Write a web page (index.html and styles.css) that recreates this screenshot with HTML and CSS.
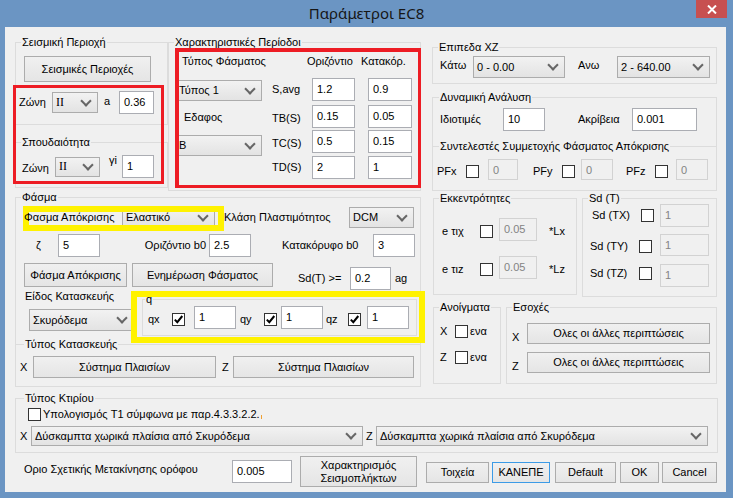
FILE: index.html
```html
<!DOCTYPE html>
<html lang="el">
<head>
<meta charset="utf-8">
<title>Παράμετροι EC8</title>
<link rel="stylesheet" href="styles.css">
</head>
<body>
<div class="window">
  <div class="titlebar">
    <span></span>
    <div class="title">Παράμετροι EC8</div>
    <div class="close"><svg width="10" height="9" viewBox="0 0 10 9"><path d="M1 0.5 L9 8.5 M9 0.5 L1 8.5" stroke="#fff" stroke-width="2"/></svg></div>
  </div>
  <div class="client">
    <div class="top">
      <div class="left-area">
        <div class="row-a">
          <div class="col-seis">
            <div class="group g-seis">
              <div class="legend">Σεισμική Περιοχή</div>
              <div class="btn b-seis">Σεισμικές Περιοχές</div>
              <div class="line l-zone1"><span>Ζώνη</span><div class="sel sel-ii">II</div><span class="ind6 up1">a</span><div class="tb">0.36</div></div>
            </div>
            <div class="group g-spoud">
              <div class="legend">Σπουδαιότητα</div>
              <div class="line l-zone2"><span class="dn1">Ζώνη</span><div class="sel sel-ii">II</div><span class="ind9 gi">γi</span><div class="tb">1</div></div>
            </div>
          </div>
          <div class="group g-xar">
            <div class="legend">Χαρακτηριστικές Περίοδοι</div>
            <div class="xar-body">
              <div class="xar-left">
                <div class="xl-head">Τύπος Φάσματος</div>
                <div class="sel xl-sel1">Τύπος 1</div>
                <div class="xl-ed">Εδαφος</div>
                <div class="sel xl-sel2">B</div>
              </div>
              <div class="xar-right">
                <div class="xr-head"><span>Οριζόντιο</span><span>Κατακόρ.</span></div>
                <div class="line xr-row r1"><span>S,avg</span><div class="tb">1.2</div><div class="tb">0.9</div></div>
                <div class="line xr-row r2"><span class="dn1">TB(S)</span><div class="tb">0.15</div><div class="tb">0.05</div></div>
                <div class="line xr-row r3"><span class="dn1">TC(S)</span><div class="tb">0.5</div><div class="tb">0.15</div></div>
                <div class="line xr-row r4"><span>TD(S)</span><div class="tb">2</div><div class="tb">1</div></div>
              </div>
            </div>
          </div>
        </div>
        <div class="group g-fasma">
          <div class="legend">Φάσμα</div>
          <div class="line f-r1"><span class="above">Φασμα Απόκρισης</span><div class="sel">Ελαστικό</div><span class="ind9">Κλάση Πλαστιμότητος</span><div class="sel">DCM</div></div>
          <div class="line f-r2"><span>ζ</span><div class="tb">5</div><span class="right3">Οριζόντιο b0</span><div class="tb">2.5</div><span class="ind31">Κατακόρυφο b0</span><div class="tb">3</div></div>
          <div class="f-r3">
            <div class="btn b-fa">Φάσμα Απόκρισης</div>
            <div class="btn b-en">Ενημέρωση Φάσματος</div>
            <span class="sd-lbl">Sd(T) &gt;=</span>
            <div class="tb tb-sd">0.2</div>
            <span class="ag">ag</span>
          </div>
          <div class="f-r4">
            <div class="eidos">
              <div class="eidos-lbl">Είδος Κατασκευής</div>
              <div class="sel sel-sky">Σκυρόδεμα</div>
            </div>
            <div class="group g-q">
              <div class="legend lg-q">q</div>
              <div class="q-row">
                <span class="q-l1">qx</span>
                <div class="cb"><svg width="11" height="11" viewBox="0 0 11 11"><path d="M1.8 5.6 L4.3 8.2 L9.3 2" stroke="#000" stroke-width="2" fill="none"/></svg></div>
                <div class="tb q-tb1">1</div>
                <span class="q-l2">qy</span>
                <div class="cb"><svg width="11" height="11" viewBox="0 0 11 11"><path d="M1.8 5.6 L4.3 8.2 L9.3 2" stroke="#000" stroke-width="2" fill="none"/></svg></div>
                <div class="tb q-tb2">1</div>
                <span class="q-l3">qz</span>
                <div class="cb"><svg width="11" height="11" viewBox="0 0 11 11"><path d="M1.8 5.6 L4.3 8.2 L9.3 2" stroke="#000" stroke-width="2" fill="none"/></svg></div>
                <div class="tb q-tb3">1</div>
              </div>
            </div>
          </div>
          <div class="g-typos">
            <div class="legend lg-8">Τύπος Κατασκευής</div>
            <div class="line t-row"><span>X</span><div class="btn">Σύστημα Πλαισίων</div><span class="ind6">Z</span><div class="btn">Σύστημα Πλαισίων</div></div>
          </div>
        </div>
      </div>
      <div class="right-area">
        <div class="group g-epip">
          <div class="legend">Επιπεδα XZ</div>
          <div class="line e-row"><span class="up2">Κάτω</span><div class="sel">0 - 0.00</div><span class="ind13 up2">Ανω</span><div class="sel">2 - 640.00</div></div>
        </div>
        <div class="group g-dyn">
          <div class="legend lg-6">Δυναμική Ανάλυση</div>
          <div class="line d-row"><span>Ιδιοτιμές</span><div class="tb">10</div><span class="ind33">Ακρίβεια</span><div class="tb">0.001</div></div>
          <div class="g-synt">
            <div class="legend lg-6">Συντελεστές Συμμετοχής Φάσματος Απόκρισης</div>
            <div class="p-row">
              <span class="p-l1">PFx</span><div class="cb"></div><div class="tb dis p-tb1">0</div>
              <span class="p-l2">PFy</span><div class="cb"></div><div class="tb dis p-tb2">0</div>
              <span class="p-l3">PFz</span><div class="cb"></div><div class="tb dis p-tb3">0</div>
            </div>
          </div>
        </div>
        <div class="ek-row">
          <div class="group g-ekk">
            <div class="legend">Εκκεντρότητες</div>
            <div class="k-row r1"><span class="k-l">e τιχ</span><div class="cb"></div><div class="tb dis k-tb">0.05</div><span class="k-u">*Lx</span></div>
            <div class="k-row r2"><span class="k-l">e τιz</span><div class="cb"></div><div class="tb dis k-tb">0.05</div><span class="k-u">*Lz</span></div>
          </div>
          <div class="group g-sd">
            <div class="legend">Sd (T)</div>
            <div class="s-row r1"><span class="s-l">Sd (TX)</span><div class="cb"></div><div class="tb dis s-tb">1</div></div>
            <div class="s-row r2"><span class="s-l">Sd (TY)</span><div class="cb"></div><div class="tb dis s-tb">1</div></div>
            <div class="s-row r3"><span class="s-l">Sd (TZ)</span><div class="cb"></div><div class="tb dis s-tb">1</div></div>
          </div>
        </div>
        <div class="an-row">
          <div class="group g-ano">
            <div class="legend">Ανοίγματα</div>
            <div class="a-row r1"><span class="a-l">X</span><div class="cb"></div><span class="a-t">ενα</span></div>
            <div class="a-row r2"><span class="a-l">Z</span><div class="cb"></div><span class="a-t">ενα</span></div>
          </div>
          <div class="group g-eso">
            <div class="legend">Εσοχές</div>
            <div class="o-row r1"><span class="o-l">X</span><div class="btn o-btn">Ολες οι άλλες περιπτώσεις</div></div>
            <div class="o-row r2"><span class="o-l">Z</span><div class="btn o-btn">Ολες οι άλλες περιπτώσεις</div></div>
          </div>
        </div>
      </div>
    </div>
    <div class="group g-ktir">
      <div class="legend lg-8">Τύπος Κτιρίου</div>
      <div class="kt-r1"><div class="cb"></div><span class="kt-t">Υπολογισμός T1 σύμφωνα με παρ.4.3.3.2.2.<i class="mark"></i></span></div>
      <div class="line kt-r2"><span>X</span><div class="sel">Δύσκαμπτα χωρικά πλαίσια από Σκυρόδεμα</div><span class="ind3">Z</span><div class="sel">Δύσκαμπτα χωρικά πλαίσια από Σκυρόδεμα</div></div>
    </div>
    <div class="bottom">
      <span class="bt-lbl">Οριο Σχετικής Μετακίνησης ορόφου</span>
      <div class="tb tb-005">0.005</div>
      <div class="btn b-xar">Χαρακτηρισμός<br>Σεισμοπλήκτων</div>
      <div class="btn b-sm b-toix">Τοιχεία</div>
      <div class="btn b-sm b-kan">ΚΑΝΕΠΕ</div>
      <div class="btn b-sm b-def">Default</div>
      <div class="btn b-sm b-ok">OK</div>
      <div class="btn b-sm b-can">Cancel</div>
    </div>
  </div>
  <div class="hl hl-red1"></div>
  <div class="hl hl-red2"></div>
  <div class="hl hl-yel1"></div>
  <div class="hl hl-yel2"></div>
</div>
</body>
</html>
```
FILE: styles.css
```css
* { box-sizing: border-box; }
html, body { margin: 0; padding: 0; }
body {
  width: 733px; height: 498px; overflow: hidden;
  background: #6b95c3;
  font-family: "Liberation Sans", Arial, sans-serif;
  font-size: 11px; line-height: 13px; color: #000;
}
span, div { white-space: nowrap; }

.window { position: relative; width: 733px; height: 498px; background: #6b95c3; display: flex; flex-direction: column; }
.titlebar { height: 27px; display: grid; grid-template-columns: 1fr auto 1fr; align-items: start; }
.title { font-family: "Noto Sans", "Open Sans", sans-serif; font-size: 15px; line-height: 20px; margin-top: 3px; color: #161616; }
.close { justify-self: end; margin-right: 6px; width: 31px; height: 18px; background: #c75050; display: flex; align-items: center; justify-content: center; }

.client { margin: 0 7px 0 5px; height: 465px; background: #f0f0f0; display: flex; flex-direction: column; }
.top { display: flex; }
.left-area { margin-left: 10px; width: 406px; display: flex; flex-direction: column; }
.right-area { margin-left: 11px; width: 285px; display: flex; flex-direction: column; }
.row-a { display: flex; margin-top: 15px; }
.col-seis { width: 153px; display: flex; flex-direction: column; }

/* group boxes */
.group { border: 1px solid #dcdcdc; }
.legend { width: max-content; height: 13px; margin: -7px 0 -6px 5px; padding: 0 1px; background: #f0f0f0; }
.lg-6 { margin-left: 6px; }
.lg-8 { margin-left: 8px; }
.lg-q { margin-left: 2px; }

/* controls */
.tb { background: #fff; border: 1px solid #abadb3; padding: 2px 0 0 4px; line-height: 16px; height: 23px; overflow: hidden; }
.tb.dis { background: #f0f0f0; border-color: #d2d2d2; color: #838383; }
.sel { border: 1px solid #acacac; background: linear-gradient(#f2f2f2, #e3e3e3); display: flex; align-items: center; padding-left: 3px; height: 21px; overflow: hidden; }
.sel::after { content: ""; flex: none; width: 6px; height: 6px; border-right: 2px solid #666; border-bottom: 2px solid #666; transform: rotate(45deg); margin: -4px 7px 0 auto; }
.sel-ii { font-family: "Liberation Serif", serif; font-size: 12px; }
.btn { border: 1px solid #acacac; background: linear-gradient(#f0f0f0, #e5e5e5); display: flex; align-items: center; justify-content: center; text-align: center; }
.cb { flex: none; width: 13px; height: 13px; border: 1px solid #333; background: #fff; display: flex; align-items: center; justify-content: center; }

/* generic rows */
.line { display: grid; align-items: center; }
.ind3 { padding-left: 3px; }
.ind6 { padding-left: 6px; }
.ind9 { padding-left: 9px; }
.ind13 { padding-left: 13px; }
.ind31 { padding-left: 31px; }
.ind33 { padding-left: 33px; }
.right3 { text-align: right; padding-right: 3px; }
.up1 { margin-bottom: 2px; }
.up2 { margin-bottom: 4px; }
.dn1 { margin-top: 3px; }
.above { position: relative; z-index: 2; }

/* Σεισμική Περιοχή */
.g-seis { height: 83px; }
.b-seis { width: 127px; height: 26px; margin: 13px 0 0 8px; }
.l-zone1 { margin-top: 9px; height: 23px; padding-left: 3px; grid-template-columns: 33px 46px 21px 35px; }
.g-spoud { margin-top: 17px; height: 46px; }
.l-zone2 { margin-top: 12px; height: 23px; padding-left: 6px; grid-template-columns: 33px 45px 22px 32px; }
.l-zone2 .sel { height: 20px; }
.gi { align-self: start; margin-top: -1px; }

/* Χαρακτηριστικές Περίοδοι */
.g-xar { width: 253px; height: 149px; }
.xar-body { display: flex; }
.xar-left { margin-left: 6px; width: 87px; display: flex; flex-direction: column; }
.xl-head { margin-top: 12px; padding-left: 7px; }
.xl-sel1 { margin-top: 12px; }
.xl-ed { margin-top: 10px; padding-left: 9px; }
.xl-sel2 { margin-top: 11px; }
.xar-right { margin-left: 10px; width: 140px; display: flex; flex-direction: column; }
.xr-head { margin-top: 12px; padding-left: 35px; display: grid; grid-template-columns: 54px auto; }
.xr-row { grid-template-columns: 40px 43px 57px; height: 23px; }
.xr-row .tb:last-child { width: 44px; justify-self: end; }
.xr-row.r1 { margin-top: 10px; }
.xr-row.r2 { margin-top: 4px; }
.xr-row.r3 { margin-top: 2px; }
.xr-row.r4 { margin-top: 3px; }

/* Φάσμα */
.g-fasma { margin-top: 6px; height: 190px; }
.f-r1 { margin-top: 9px; height: 21px; padding-left: 8px; grid-template-columns: 98px 93px 134px 65px; }
.f-r2 { margin-top: 6px; height: 23px; padding-left: 20px; grid-template-columns: 22px 42px 109px 42px 122px 42px; }
.f-r3 { display: flex; align-items: flex-start; margin-top: 6px; padding-left: 8px; }
.b-fa { width: 103px; height: 24px; }
.b-en { margin-left: 5px; width: 141px; height: 24px; }
.sd-lbl { margin: 9px 0 0 25px; width: 52px; }
.tb-sd { margin-top: 4px; width: 41px; }
.ag { margin: 9px 0 0 4px; }
.f-r4 { display: flex; align-items: flex-start; }
.eidos { width: 126px; display: flex; flex-direction: column; align-items: flex-start; }
.eidos-lbl { padding-left: 9px; }
.sel-sky { margin: 6px 0 0 13px; width: 105px; height: 22px; }
.g-q { margin-top: 9px; width: 275px; height: 37px; }
.q-row { display: flex; align-items: center; margin-top: 6px; height: 23px; padding-left: 5px; }
.q-row .cb { margin-top: 3px; }
.q-l1 { width: 24px; margin-top: 3px; }
.q-l2 { width: 28px; padding-left: 4px; margin-top: 3px; }
.q-l3 { width: 25px; padding-left: 3px; margin-top: 3px; }
.q-tb1 { margin-left: 9px; width: 42px; }
.q-tb2 { margin-left: 4px; width: 42px; }
.q-tb3 { margin-left: 6px; width: 42px; }
.g-typos { margin-top: 8px; border-top: 1px solid #dcdcdc; }
.t-row { margin-top: 11px; height: 22px; padding-left: 4px; grid-template-columns: 13px 183px 17px 181px; }
.t-row .btn { height: 22px; }

/* right side */
.g-epip { margin-top: 20px; height: 37px; }
.e-row { margin-top: 8px; height: 22px; padding-left: 7px; grid-template-columns: 33px 92px 52px 93px; }
.e-row .sel { height: 22px; }
.g-dyn { margin-top: 13px; height: 94px; }
.d-row { margin-top: 10px; height: 23px; padding-left: 7px; grid-template-columns: 63px 42px 87px 65px; }
.g-synt { margin-top: 15px; border-top: 1px solid #dcdcdc; }
.p-row { display: flex; align-items: center; margin-top: 12px; height: 21px; padding-left: 4px; }
.p-row .cb, .p-row span { margin-top: 4px; }
.p-row .tb { height: 21px; }
.p-l1 { width: 29px; }
.p-l2 { width: 44px; padding-left: 15px; }
.p-l3 { width: 42px; padding-left: 13px; }
.p-tb1 { margin-left: 9px; width: 30px; }
.p-tb2 { margin-left: 6px; width: 32px; }
.p-tb3 { margin-left: 8px; width: 32px; }

.ek-row { display: flex; margin-top: 7px; }
.g-ekk { margin-left: 1px; width: 144px; height: 97px; }
.k-row { display: flex; align-items: center; height: 23px; padding-left: 8px; }
.k-row.r1 { margin-top: 19px; }
.k-row.r2 { margin-top: 15px; }
.k-row span, .k-row .cb { margin-top: 4px; }
.k-l { width: 38px; }
.k-tb { margin-left: 6px; width: 38px; }
.k-u { margin-left: 12px; }
.g-sd { margin-left: 5px; width: 135px; height: 99px; }
.s-row { display: flex; align-items: center; height: 23px; padding-left: 7px; }
.s-row.r1 { margin-top: 5px; padding-left: 9px; }
.s-row.r2 { margin-top: 7px; height: 22px; }
.s-row.r3 { margin-top: 8px; }
.s-row.r2 span, .s-row.r2 .cb { margin-top: 3px; }
.s-row.r3 span, .s-row.r3 .cb { margin-bottom: 4px; }
.s-l { width: 49px; }
.s-tb { margin-left: 8px; width: 49px; }
.s-row.r1 .s-tb { margin-left: 6px; }
.s-row.r2 .s-tb { height: 22px; }

.an-row { display: flex; margin-top: 10px; }
.g-ano { margin-left: 1px; width: 68px; height: 77px; }
.a-row { display: flex; align-items: center; height: 13px; padding-left: 6px; }
.a-row.r1 { margin-top: 17px; }
.a-row.r2 { margin-top: 13px; }
.a-l { width: 15px; }
.a-t { margin-left: 2px; }
.g-eso { margin-left: 5px; width: 211px; height: 77px; }
.o-row { display: flex; align-items: flex-start; padding-left: 5px; }
.o-row.r1 { margin-top: 15px; }
.o-row.r2 { margin-top: 8px; }
.o-l { width: 15px; margin-top: 8px; }
.o-btn { width: 183px; height: 21px; }

/* Τύπος Κτιρίου */
.g-ktir { margin: 11px 0 0 10px; width: 703px; height: 55px; }
.kt-r1 { display: flex; align-items: center; margin-top: 9px; padding-left: 12px; height: 13px; }
.kt-t { margin-left: 2px; }
.mark { display: inline-block; width: 1px; height: 4px; margin-left: 1px; background: #f0a030; vertical-align: -1px; }
.kt-r2 { margin-top: 5px; height: 20px; padding-left: 4px; grid-template-columns: 11px 332px 13px 332px; }
.kt-r2 .sel { height: 20px; }

/* bottom row */
.bottom { display: flex; align-items: flex-start; margin-top: 3px; padding-left: 19px; }
.bt-lbl { width: 208px; margin-top: 7px; }
.tb-005 { width: 60px; margin-top: 4px; }
.b-xar { margin-left: 8px; width: 117px; height: 31px; white-space: normal; line-height: 13px; }
.b-sm { margin-top: 6px; height: 21px; }
.b-toix { margin-left: 9px; width: 63px; }
.b-kan { margin-left: 3px; width: 58px; border-color: #3c9be6; }
.b-def { margin-left: 5px; width: 61px; }
.b-ok { margin-left: 4px; width: 39px; }
.b-can { margin-left: 3px; width: 55px; }

/* annotation highlights drawn over the dialog */
.hl { position: absolute; z-index: 1; pointer-events: none; }
.hl-red1 { left: 13px; top: 85px; width: 151px; height: 99px; border: 3px solid #ed1c24; }
.hl-red2 { left: 175px; top: 48px; width: 246px; height: 140px; border: 3px solid #ed1c24; border-top-width: 4px; border-left-width: 4px; }
.hl-yel1 { left: 23px; top: 206px; width: 201px; height: 25px; border: 6px solid #fff200; }
.hl-yel2 { left: 131px; top: 291px; width: 294px; height: 52px; border: 6px solid #fff200; }
```
